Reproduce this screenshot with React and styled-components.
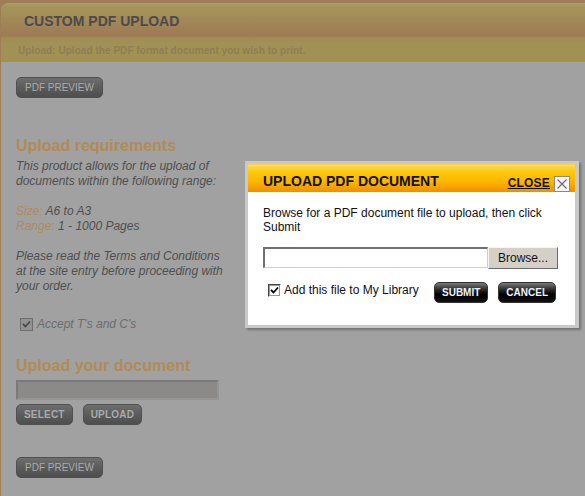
import React from 'react';
import styled, {createGlobalStyle} from 'styled-components';

// page is shown dimmed behind the modal, so the colours below are the dimmed ones

const GlobalStyle = createGlobalStyle`
    html, body {
        margin: 0;
        padding: 0;
        background: #9e7e57;
        font-family: "Liberation Sans", Arial, sans-serif;
    }
`;

const Page = styled.div`
    position: relative;
    width: 585px;
    height: 496px;
    overflow: hidden;
    background: #9e7e57;
`, Panel = styled.div`
    margin: 3px 0 0 1px;
    height: 493px;
    background: #a1a1a1;
    border-top-left-radius: 8px;
    overflow: hidden;
`, Header = styled.div`
    height: 34px;
    box-sizing: border-box;
    padding: 10px 0 0 23px;
    background: linear-gradient(to bottom, #a9a07a 0, #a6975b 2px, #a38c59 14px, #9e7c55 30px, #9f8054 34px);
`, Title = styled.h1`
    margin: 0;
    font-size: 14px;
    line-height: 16px;
    font-weight: 700;
    color: #4b4b4d;
`, SubBand = styled.div`
    height: 25px;
    box-sizing: border-box;
    padding: 8px 0 0 17px;
    background: linear-gradient(to bottom, #a08a55 0, #a29156 6px, #a29152 25px);
    font-size: 10px;
    line-height: 12px;
    font-weight: 700;
    letter-spacing: 0.05px;
    color: #8f7d55;
`, Content = styled.div`
    padding: 15px 0 0 15px;
    display: flex;
    flex-direction: column;
    align-items: flex-start;
`, GreyButton = styled.button`
    height: 21px;
    padding: 0 ${p => p.$pad || 8}px;
    border: 1px solid #505050;
    border-radius: 5px;
    background: linear-gradient(to bottom, #6e6e6e 0, #5c5c5c 50%, #4e4e4e 100%);
    color: #a9aaae;
    font-family: "Liberation Sans", Arial, sans-serif;
    font-size: 10px;
    font-weight: ${p => p.$bold ? 700 : 400};
    letter-spacing: ${p => p.$bold ? '0.2px' : '0'};
    line-height: 19px;
    cursor: pointer;
`, SectionTitle = styled.h2`
    margin: ${p => p.$top}px 0 0 0;
    font-size: 16px;
    line-height: 20px;
    font-weight: 700;
    color: #b08b57;
`, Copy = styled.p`
    margin: ${p => p.$top || 0}px 0 0 0;
    font-size: 12px;
    line-height: 15px;
    font-style: italic;
    color: #4f4f4f;
`, Label = styled.span`
    color: #b08b57;
`, AcceptRow = styled.label`
    display: flex;
    align-items: center;
    gap: 4px;
    margin: 23px 0 0 4px;
    font-size: 12px;
    font-style: italic;
    color: #6c6c6c;
`, DimBox = styled.span`
    width: 11px;
    height: 11px;
    border: 1px solid #6e6e6e;
    background: #939393;
    display: flex;
    align-items: center;
    justify-content: center;
`, FileField = styled.div`
    margin-top: 4px;
    width: 203px;
    height: 20px;
    box-sizing: border-box;
    border: 2px solid #7a7a7a;
    border-right-color: #959595;
    border-bottom-color: #959595;
    background: #8b8a88;
`, ButtonRow = styled.div`
    display: flex;
    gap: 10px;
    margin-top: ${p => p.$top || 4}px;
`;

const Dialog = styled.div`
    position: absolute;
    left: 245px;
    top: 161px;
    width: 327px;
    border: 3px solid #c9c9c9;
    border-right-width: 4px;
    background: #fff;
    box-shadow: 2px 2px 2px rgba(0, 0, 0, 0.28);
    padding-bottom: 22px;
`, DialogHead = styled.div`
    height: 28px;
    box-sizing: border-box;
    display: flex;
    align-items: flex-end;
    justify-content: space-between;
    padding: 0 5px 0 15px;
    background: linear-gradient(to bottom, #ffc400 0, #ffe27a 1px, #ffd23a 3px, #ffc707 9px, #fdb500 18px, #f28d00 28px);
`, DialogTitle = styled.h3`
    margin: 0 0 3px 0;
    font-size: 14px;
    line-height: 15px;
    font-weight: 700;
    color: #111;
`, CloseWrap = styled.div`
    display: flex;
    align-items: flex-end;
    gap: 4px;
`, CloseLink = styled.a`
    font-size: 12px;
    line-height: 14px;
    margin-bottom: 2px;
    font-weight: 700;
    color: #111;
    text-decoration: underline;
    letter-spacing: 0.2px;
    cursor: pointer;
`, CloseBox = styled.span`
    width: 14px;
    height: 14px;
    border: 1px solid #8a8a8a;
    background: #f4f4f4;
    display: flex;
    align-items: center;
    justify-content: center;
`, DialogBody = styled.div`
    padding: 14px 0 0 15px;
`, DialogText = styled.p`
    margin: 0;
    font-size: 12px;
    line-height: 14px;
    color: #111;
    width: 300px;
`, BrowseRow = styled.div`
    display: flex;
    margin-top: 13px;
`, BrowseInput = styled.div`
    width: 225px;
    height: 21px;
    box-sizing: border-box;
    border: 1px solid #d4d0c8;
    border-top: 2px solid #6e6e6e;
    border-left: 2px solid #6e6e6e;
    background: #fff;
`, BrowseButton = styled.button`
    width: 70px;
    height: 22px;
    border: 1px solid #6a6a6a;
    border-top-color: #f4f4f4;
    border-left-color: #f4f4f4;
    background: #d4d0c8;
    font-family: "Liberation Sans", Arial, sans-serif;
    font-size: 12px;
    color: #111;
    padding: 0;
`, ActionRow = styled.div`
    display: flex;
    align-items: center;
    margin-top: 13px;
`, LibraryLabel = styled.label`
    display: flex;
    align-items: center;
    gap: 3px;
    margin: 0 0 5px 5px;
    font-size: 12px;
    color: #111;
    width: 166px;
`, CheckBox = styled.span`
    width: 11px;
    height: 11px;
    border: 1px solid #fff;
    border-top-color: #444;
    border-left-color: #444;
    outline: 1px solid #999;
    outline-offset: -2px;
    background: #fff;
    display: flex;
    align-items: center;
    justify-content: center;
`, BlackButton = styled.button`
    height: 21px;
    padding: 0 ${p => p.$pad}px;
    margin-right: 10px;
    border: 1px solid #333;
    border-radius: 5px;
    background: linear-gradient(to bottom, #7a7a7a 0, #2a2a2a 35%, #000 60%, #111 100%);
    color: #eef4ff;
    font-family: "Liberation Sans", Arial, sans-serif;
    font-size: 10px;
    font-weight: 700;
    line-height: 19px;
    cursor: pointer;
`;

const Tick = ({color}) => (
    <svg width="9" height="9" viewBox="0 0 9 9">
        <path d="M1 4 L3.5 6.5 L8 1.5" fill="none" stroke={color} strokeWidth="1.8" />
    </svg>
);

export default function App() {
    return (
        <Page>
            <GlobalStyle />
            <Panel>
                <Header>
                    <Title>CUSTOM PDF UPLOAD</Title>
                </Header>
                <SubBand>Upload: Upload the PDF format document you wish to print.</SubBand>
                <Content>
                    <GreyButton>PDF PREVIEW</GreyButton>
                    <SectionTitle $top={38}>Upload requirements</SectionTitle>
                    <Copy $top={3}>
                        This product allows for the upload of<br />
                        documents within the following range:
                    </Copy>
                    <Copy $top={15}>
                        <Label>Size:</Label> A6 to A3<br />
                        <Label>Range:</Label> 1 - 1000 Pages
                    </Copy>
                    <Copy $top={15}>
                        Please read the Terms and Conditions<br />
                        at the site entry before proceeding with<br />
                        your order.
                    </Copy>
                    <AcceptRow>
                        <DimBox><Tick color="#4a4a4a" /></DimBox>
                        Accept T's and C's
                    </AcceptRow>
                    <SectionTitle $top={25}>Upload your document</SectionTitle>
                    <FileField />
                    <ButtonRow>
                        <GreyButton $bold $pad={7}>SELECT</GreyButton>
                        <GreyButton $bold $pad={7}>UPLOAD</GreyButton>
                    </ButtonRow>
                    <ButtonRow $top={32}>
                        <GreyButton>PDF PREVIEW</GreyButton>
                    </ButtonRow>
                </Content>
            </Panel>

            <Dialog>
                <DialogHead>
                    <DialogTitle>UPLOAD PDF DOCUMENT</DialogTitle>
                    <CloseWrap>
                        <CloseLink>CLOSE</CloseLink>
                        <CloseBox>
                            <svg width="12" height="12" viewBox="0 0 12 12">
                                <path d="M1.5 1.5 L10.5 10.5 M10.5 1.5 L1.5 10.5" stroke="#6a6a6a" strokeWidth="1.1" />
                            </svg>
                        </CloseBox>
                    </CloseWrap>
                </DialogHead>
                <DialogBody>
                    <DialogText>Browse for a PDF document file to upload, then click Submit</DialogText>
                    <BrowseRow>
                        <BrowseInput />
                        <BrowseButton>Browse...</BrowseButton>
                    </BrowseRow>
                    <ActionRow>
                        <LibraryLabel>
                            <CheckBox><Tick color="#000" /></CheckBox>
                            Add this file to My Library
                        </LibraryLabel>
                        <BlackButton $pad={7}>SUBMIT</BlackButton>
                        <BlackButton $pad={7}>CANCEL</BlackButton>
                    </ActionRow>
                </DialogBody>
            </Dialog>
        </Page>
    );
}
